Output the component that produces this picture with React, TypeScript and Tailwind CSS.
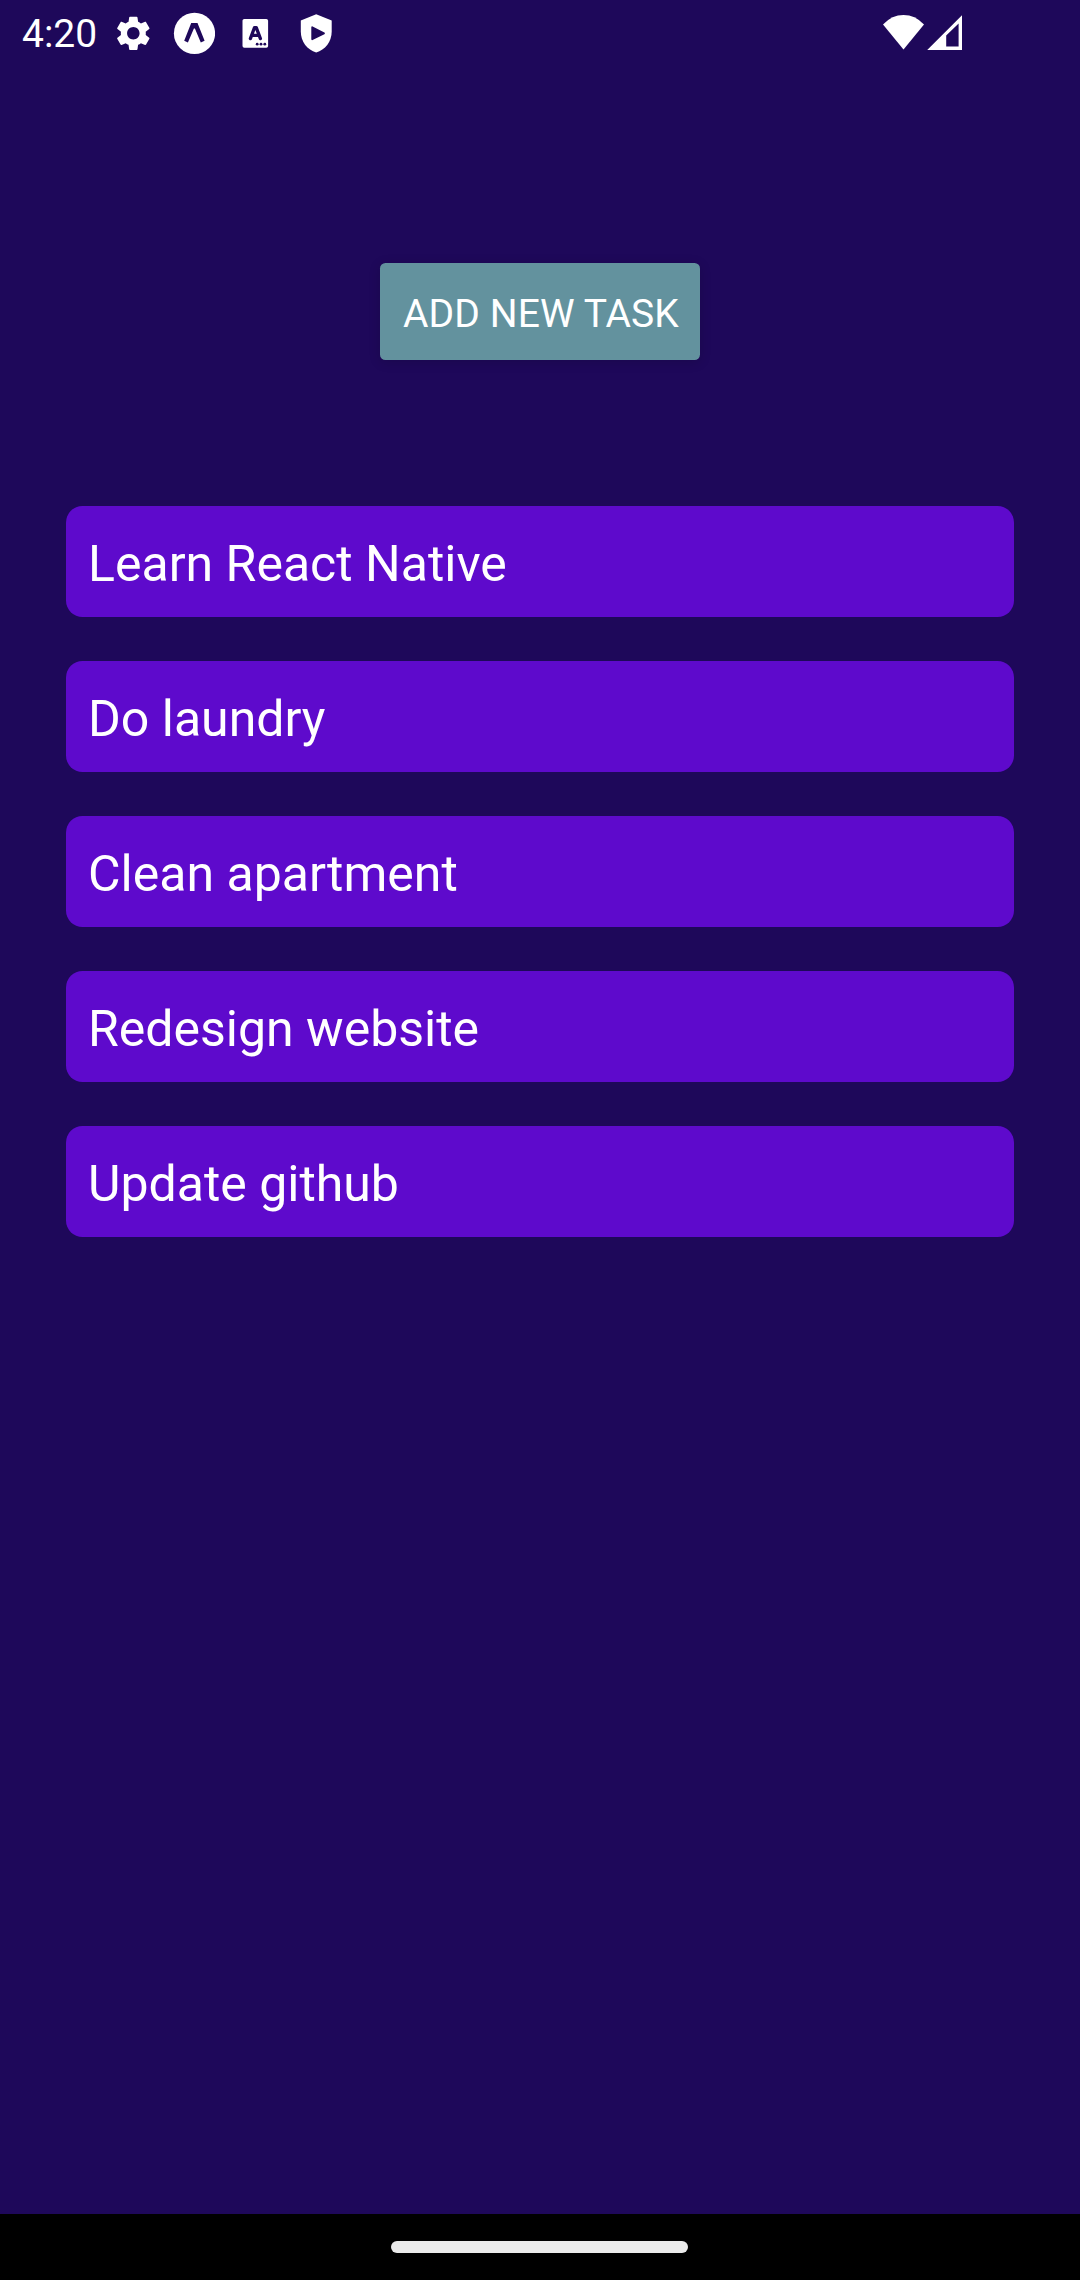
const tasks = [
  'Learn React Native',
  'Do laundry',
  'Clean apartment',
  'Redesign website',
  'Update github',
];

function SettingsIcon() {
  return (
    <svg className="size-[42px]" viewBox="0 0 42 42" fill="white">
      <g transform="translate(0.5 0.5) scale(1.735)">
        <path d="M19.14 12.94c.04-.3.06-.61.06-.94 0-.32-.02-.64-.07-.94l2.03-1.58c.18-.14.23-.41.12-.61l-1.92-3.32c-.12-.22-.37-.29-.59-.22l-2.39.96c-.5-.38-1.03-.7-1.62-.94l-.36-2.54c-.04-.24-.24-.41-.48-.41h-3.84c-.24 0-.43.17-.47.41l-.36 2.54c-.59.24-1.13.57-1.62.94l-2.39-.96c-.22-.08-.47 0-.59.22L2.74 8.87c-.12.21-.08.47.12.61l2.03 1.58c-.05.3-.09.63-.09.94s.02.64.07.94l-2.03 1.58c-.18.14-.23.41-.12.61l1.92 3.32c.12.22.37.29.59.22l2.39-.96c.5.38 1.03.7 1.62.94l.36 2.54c.05.24.24.41.48.41h3.84c.24 0 .44-.17.47-.41l.36-2.54c.59-.24 1.13-.56 1.62-.94l2.39.96c.22.08.47 0 .59-.22l1.92-3.32c.12-.22.07-.47-.12-.61l-2.01-1.58zM12 15.6c-1.98 0-3.6-1.62-3.6-3.6s1.62-3.6 3.6-3.6 3.6 1.62 3.6 3.6-1.62 3.6-3.6 3.6z" />
      </g>
    </svg>
  );
}

function ExpoIcon() {
  return (
    <svg className="size-[42px]" viewBox="0 0 42 42">
      <circle cx="21.5" cy="21.4" r="20.6" fill="white" />
      <path
        d="M18.2 11 H24.5 L31.6 28.8 L27.8 30.6 L21.9 16.5 H20.9 L14.9 30.6 L11.2 28.8 Z"
        fill="#1e085a"
      />
    </svg>
  );
}

function KeyboardLanguageIcon() {
  return (
    <svg className="size-[42px]" viewBox="0 0 42 42">
      <rect x="8.5" y="7" width="25.6" height="28.7" rx="1.8" fill="white" />
      <path
        d="M16.4 26.6 L20.5 15.6 H22.3 L26.4 26.6 M18.2 23.4 H24.6"
        fill="none"
        stroke="#1e085a"
        strokeWidth="3.3"
        strokeLinecap="round"
        strokeLinejoin="round"
      />
      <circle cx="23.2" cy="32.2" r="1.4" fill="#1e085a" />
      <circle cx="27" cy="32.2" r="1.4" fill="#1e085a" />
      <circle cx="30.8" cy="32.2" r="1.4" fill="#1e085a" />
    </svg>
  );
}

function ShieldPlayIcon() {
  return (
    <svg className="size-[42px]" viewBox="0 0 42 42">
      <path
        d="M21.2 2.2 L36.7 8.6 V19.5 C36.7 30 30 38 21.2 40.4 C12.4 38 5.8 30 5.8 19.5 V8.6 Z"
        fill="white"
      />
      <path
        d="M17.2 15.2 L29 21.4 L17.2 27.2 Z"
        fill="#1e085a"
        stroke="#1e085a"
        strokeWidth="1.8"
        strokeLinejoin="round"
      />
    </svg>
  );
}

function WifiIcon() {
  return (
    <svg className="h-[42px] w-[42px]" viewBox="0 0 42 42" fill="white">
      <path d="M0 12.4 Q9 3 20.5 3 Q32 3 41 12.4 L20.5 37.6 Z" />
    </svg>
  );
}

function SignalIcon() {
  return (
    <svg className="h-[42px] w-[37px]" viewBox="0 0 37 42" fill="white">
      <path
        fillRule="evenodd"
        d="M2.2 38 L37 3.2 V38 Z M21.2 23.6 V34.4 H33.6 V11.6 Z"
      />
    </svg>
  );
}

function StatusBar() {
  return (
    <header className="flex h-[66px] items-start pt-3 pr-[118px] pl-[22px]">
      <span className="w-[90px] text-[39px] leading-[45px] text-white">4:20</span>
      <div className="flex gap-[19px]">
        <SettingsIcon />
        <ExpoIcon />
        <KeyboardLanguageIcon />
        <ShieldPlayIcon />
      </div>
      <div className="ml-auto flex">
        <WifiIcon />
        <SignalIcon />
      </div>
    </header>
  );
}

export default function App() {
  return (
    <div className="flex h-[2280px] w-[1080px] flex-col bg-[#1e085a] font-['Roboto',sans-serif] text-white">
      <StatusBar />
      <main className="flex flex-1 flex-col px-[66px] pt-[197px]">
        <button className="h-[97px] w-[320px] self-center rounded-[5.5px] bg-[#63929e] pt-[5px] pl-[2px] text-[39px] leading-[45px] tracking-[0.1px] whitespace-nowrap shadow-[0_2px_12px_rgba(0,0,0,0.15)]">
          ADD NEW TASK
        </button>
        <ul className="mt-[146px] flex flex-col gap-11">
          {tasks.map((task) => (
            <li
              key={task}
              className="flex h-[111px] items-center rounded-[16.5px] bg-[#5e0acc] px-[22px] pt-[5px] text-[50px] leading-[58px]"
            >
              {task}
            </li>
          ))}
        </ul>
      </main>
      <footer className="flex h-[66px] bg-black pt-[27px] pl-[391px]">
        <div className="h-[11.5px] w-[297px] rounded-full bg-[#ebebeb]" />
      </footer>
    </div>
  );
}
